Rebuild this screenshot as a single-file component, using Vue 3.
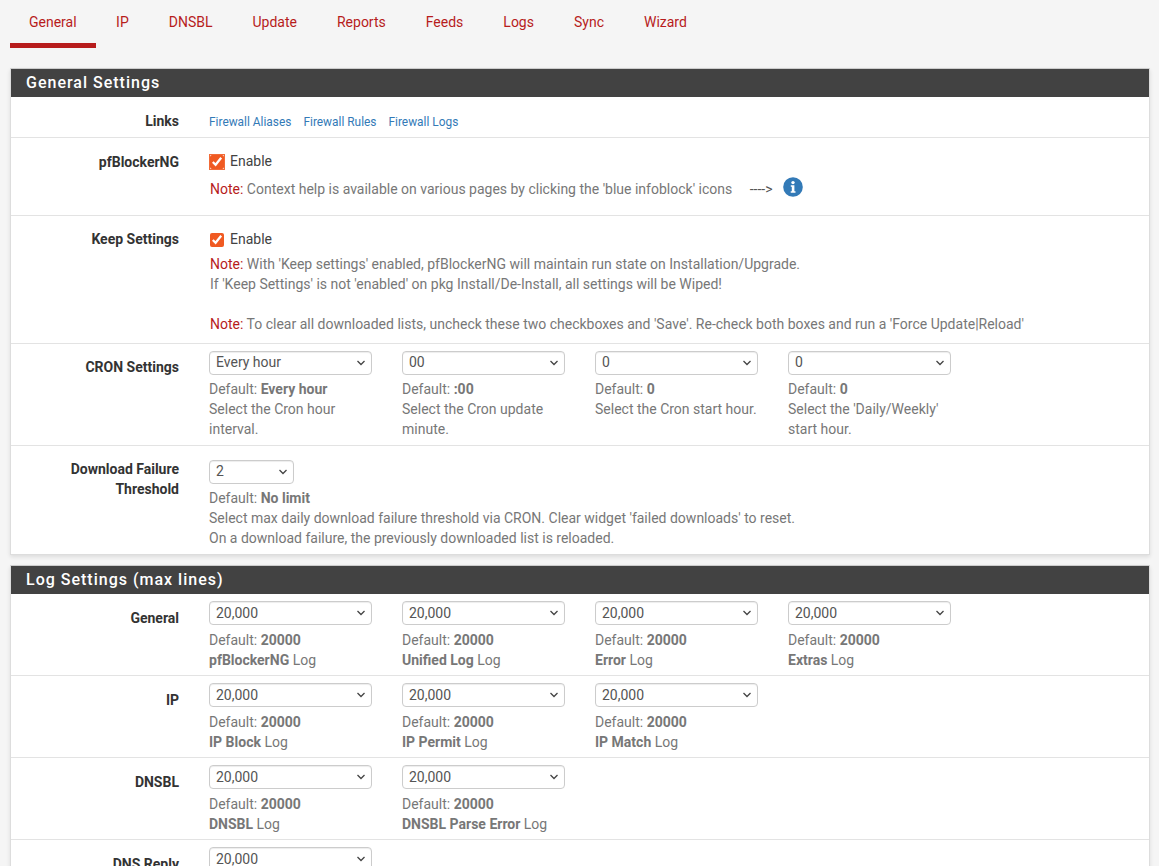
<template>
  <div class="page">
    <!-- Tab bar -->
    <ul class="tabs">
      <li v-for="(tab, i) in tabs" :key="tab" :class="{ active: i === 0 }">{{ tab }}</li>
    </ul>

    <div class="panel">
      <h2 class="panel__title">General Settings</h2>

      <div class="row row--links">
        <label class="row__label">Links</label>
        <div class="row__body links">
          <a href="#">Firewall Aliases</a>
          <a href="#">Firewall Rules</a>
          <a href="#">Firewall Logs</a>
        </div>
      </div>

      <div class="row row--enable">
        <label class="row__label">pfBlockerNG</label>
        <div class="row__body">
          <label class="check"><span class="check__box check__box--focus"><input type="checkbox" checked /></span> Enable</label>
          <div class="help help--context">
            <span class="note">Note:</span>&nbsp;Context help is available on various pages by clicking the 'blue infoblock' icons
            <span class="arrow">----&gt;</span>
            <svg class="info" viewBox="0 0 20 20" width="20" height="20">
              <circle cx="10" cy="10" r="9.8" fill="#337ab7" />
              <circle cx="10" cy="5.6" r="1.7" fill="#fff" />
              <path d="M7.8 8.3h3.6v5.9h1.1v1.5H7.7v-1.5h1.1V9.8h-1z" fill="#fff" />
            </svg>
          </div>
        </div>
      </div>

      <div class="row row--keep">
        <label class="row__label">Keep Settings</label>
        <div class="row__body">
          <label class="check"><span class="check__box"><input type="checkbox" checked /></span> Enable</label>
          <div class="help help--keep">
            <span class="note">Note:</span> With 'Keep settings' enabled, pfBlockerNG will maintain run state on Installation/Upgrade.<br />
            If 'Keep Settings' is not 'enabled' on pkg Install/De-Install, all settings will be Wiped!<br /><br />
            <span class="note">Note:</span> To clear all downloaded lists, uncheck these two checkboxes and 'Save'. Re-check both boxes and run a 'Force Update|Reload'
          </div>
        </div>
      </div>

      <div class="row row--cron">
        <label class="row__label">CRON Settings</label>
        <div class="row__body cols">
          <div v-for="c in cron" :key="c.help" class="col">
            <select><option>{{ c.value }}</option></select>
            <div class="help">Default: <b>{{ c.def }}</b><br />{{ c.help }}</div>
          </div>
        </div>
      </div>

      <div class="row row--threshold">
        <label class="row__label">Download Failure<br />Threshold</label>
        <div class="row__body">
          <select class="small"><option>2</option></select>
          <div class="help">
            Default: <b>No limit</b><br />
            Select max daily download failure threshold via CRON. Clear widget 'failed downloads' to reset.<br />
            On a download failure, the previously downloaded list is reloaded.
          </div>
        </div>
      </div>
    </div>

    <div class="panel">
      <h2 class="panel__title">Log Settings (max lines)</h2>

      <div v-for="row in logs" :key="row.label" class="row row--log">
        <label class="row__label">{{ row.label }}</label>
        <div class="row__body cols">
          <div v-for="item in row.items" :key="item.name" class="col">
            <select><option>20,000</option></select>
            <div class="help">Default: <b>20000</b><br /><b>{{ item.name }}</b> Log</div>
          </div>
        </div>
      </div>
    </div>
  </div>
</template>

<script setup>
const tabs = ['General', 'IP', 'DNSBL', 'Update', 'Reports', 'Feeds', 'Logs', 'Sync', 'Wizard'];

const cron = [
  { value: 'Every hour', def: 'Every hour', help: 'Select the Cron hour interval.' },
  { value: '00', def: ':00', help: 'Select the Cron update minute.' },
  { value: '0', def: '0', help: 'Select the Cron start hour.' },
  { value: '0', def: '0', help: "Select the 'Daily/Weekly' start hour." },
];

const logs = [
  { label: 'General', items: [{ name: 'pfBlockerNG' }, { name: 'Unified Log' }, { name: 'Error' }, { name: 'Extras' }] },
  { label: 'IP', items: [{ name: 'IP Block' }, { name: 'IP Permit' }, { name: 'IP Match' }] },
  { label: 'DNSBL', items: [{ name: 'DNSBL' }, { name: 'DNSBL Parse Error' }] },
  { label: 'DNS Reply', items: [{ name: 'DNS Reply' }] },
];
</script>

<style>
html,
body {
  margin: 0;
  height: 866px;
  overflow: hidden;
  background: #f5f5f5;
}
</style>

<style scoped>
.page {
  padding: 0 9px 0 10px;
  font-family: Roboto, "Liberation Sans", sans-serif;
  font-size: 14px;
  line-height: 20px;
  color: #333;
}

.tabs {
  display: flex;
  list-style: none;
  margin: 0 0 20px;
  padding: 0;
}

.tabs li {
  height: 41px;
  padding: 2px 20px 0;
  line-height: 40px;
  color: #b71c1c;
  border-bottom: 5px solid transparent;
}

.tabs li.active {
  padding: 2px 19.5px 0 19px;
  border-bottom-color: #b71c1c;
}

.panel {
  margin-bottom: 10px;
  background: #fff;
  border: 1px solid #ddd;
  border-top-color: #ccc;
  box-shadow: 0 2px 4px rgba(0, 0, 0, 0.1);
}

.panel__title {
  margin: 0;
  height: 28px;
  padding-left: 15px;
  background: #424242;
  color: #fff;
  font-size: 16px;
  font-weight: 500;
  line-height: 27px;
  letter-spacing: 1px;
}

.row {
  display: flex;
  box-sizing: border-box;
  border-bottom: 1px solid #e3e3e3;
}

.row:last-child {
  border-bottom: 0;
}

.row__label {
  flex: 0 0 168px;
  padding-top: 14px;
  text-align: right;
  font-weight: 700;
}

.row__body {
  flex: 1;
  padding: 13px 0 0 30px;
  color: #777;
}

.row--links {
  height: 41px;
}

.row--enable {
  height: 78px;
}

.row--keep {
  height: 128px;
}

.row--cron {
  height: 102px;
}

.row--threshold {
  height: 108px;
}

.row--log {
  height: 82px;
}

.row--keep .row__label {
  padding-top: 13px;
}

.row--cron .row__body,
.row--log .row__body {
  padding-top: 7px;
}

.row--cron .row__label,
.row--threshold .row__label {
  padding-top: 13px;
}

.row--threshold .row__body {
  padding-top: 14px;
}

.row--log .help {
  margin-top: 5px;
}

.row--log select {
  padding-bottom: 0;
}

.links {
  display: flex;
  gap: 12px;
  padding-top: 15px;
  font-size: 11.9px;
}

.links a {
  color: #337ab7;
  text-decoration: none;
}

.check {
  display: flex;
  align-items: center;
  gap: 6px;
  color: #424242;
}

.check__box {
  display: flex;
  width: 14px;
  height: 14px;
  margin: 2px 0 0 1px;
}

.check__box--focus {
  box-shadow: 0 0 0 1px #f26b38;
}

.check input {
  width: 14px;
  height: 14px;
  margin: 0;
  accent-color: #f05a22;
}

.help {
  margin-top: 4px;
  color: #777;
}

.help b {
  font-weight: 700;
}

.help--context {
  display: flex;
  align-items: center;
  margin-top: 8px;
  padding-left: 1px;
}

.help--keep {
  padding-left: 1px;
  margin-top: 5px;
}

.note {
  color: #b71c1c;
}

.arrow {
  margin: 0 10px 0 17.5px;
  color: #555;
  font-size: 14px;
}

.info {
  margin-top: -4px;
}

.cols {
  display: flex;
}

.col {
  flex: 0 0 163px;
  margin-right: 30px;
}

select {
  display: block;
  box-sizing: border-box;
  width: 163px;
  height: 24px;
  padding: 0 20px 2px 6px;
  appearance: none;
  background: #fff url("data:image/svg+xml,%3Csvg xmlns='http://www.w3.org/2000/svg' width='10' height='6'%3E%3Cpath d='M1.5 1l3.5 3.5L8.5 1' fill='none' stroke='%23444' stroke-width='1.3'/%3E%3C/svg%3E") no-repeat right 5px center;
  border: 1px solid #ccc;
  border-radius: 4px;
  box-shadow: inset 0 1px 1px rgba(0, 0, 0, 0.075);
  color: #555;
  font-family: inherit;
  font-size: 14px;
}

select.small {
  width: 85px;
}
</style>
